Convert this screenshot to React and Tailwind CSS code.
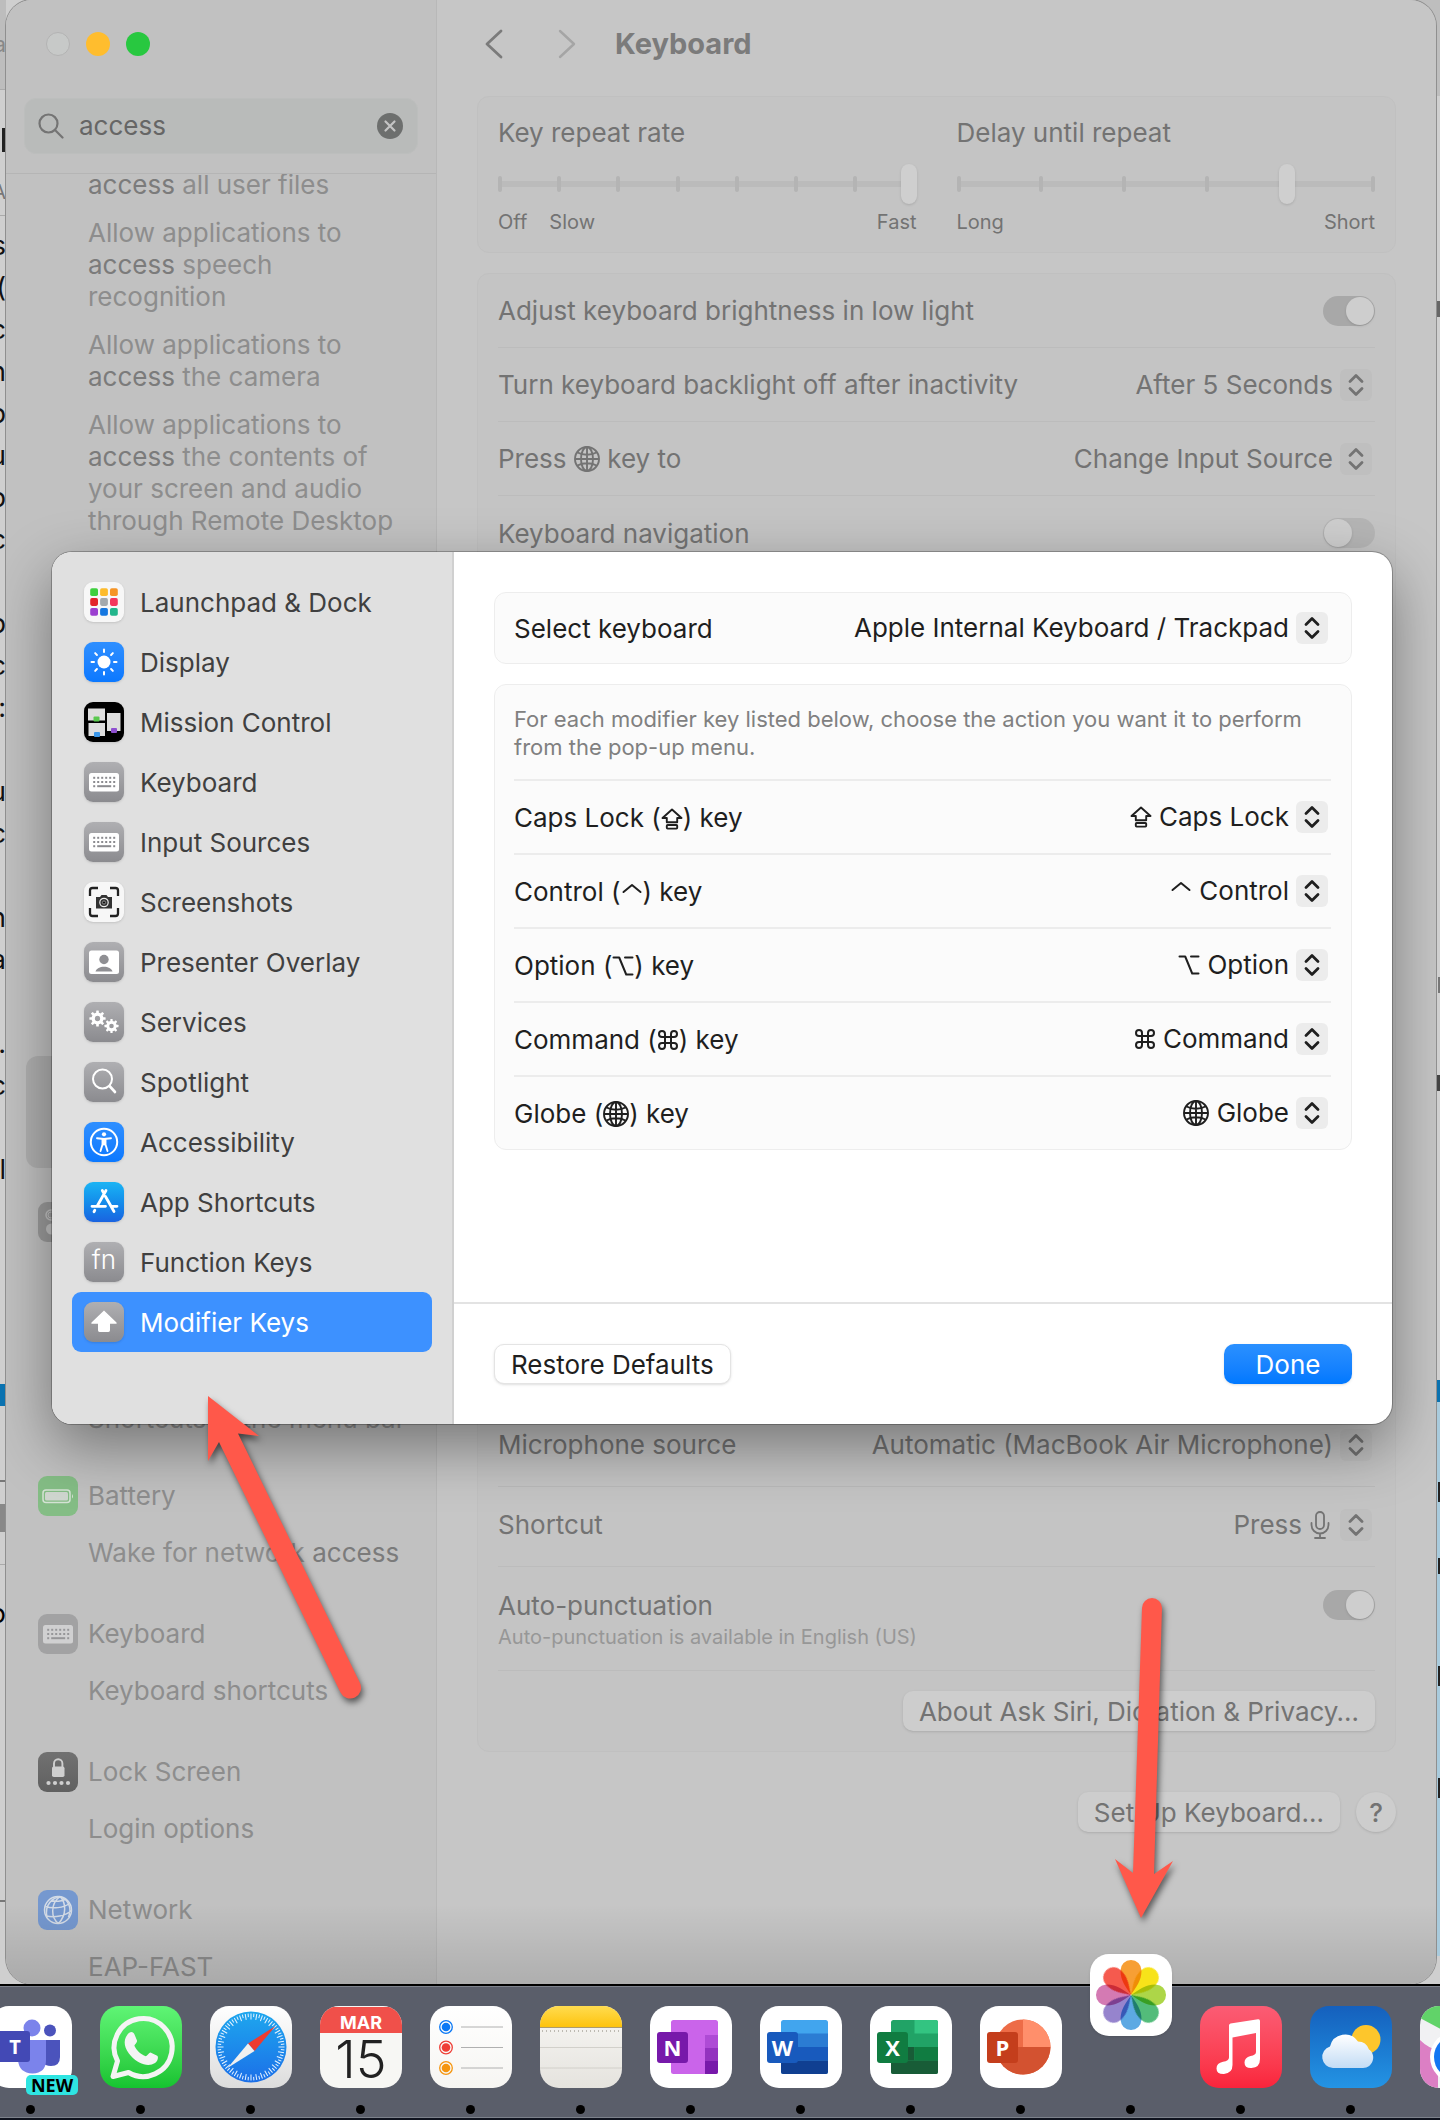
import React from "react";

const keyboardDots = [0, 1, 2, 3, 4, 5];

function KeyboardGlyph() {
  return (
    <svg viewBox="0 0 40 40" className="size-full" aria-hidden="true">
      <rect x="5" y="11" width="30" height="18.500" rx="2.500" fill="#fff" />
      <g fill="#8b8b8f">
        {[0, 1].map((r) =>
          keyboardDots.map((d) => <rect key={r + "-" + d} x={9.200 + d * 4} y={14.800 + r * 4.200} width="2" height="2" />)
        )}
        <rect x="9.200" y="23.200" width="2" height="2" />
        <rect x="13.200" y="23.200" width="14" height="2" />
        <rect x="29.200" y="23.200" width="2" height="2" />
      </g>
    </svg>
  );
}

function Globe({ className }) {
  return (
    <svg viewBox="0 0 26 26" className={className} fill="none" stroke="currentColor" strokeWidth="1.9" aria-hidden="true">
      <circle cx="13" cy="13" r="12" />
      <ellipse cx="13" cy="13" rx="6" ry="12" />
      <path d="M13 1v24M1 13h24M3.500 6.500c5.500 3 13.500 3 19 0M3.500 19.500c5.500-3 13.500-3 19 0" />
    </svg>
  );
}

function CapsGlyph({ className }) {
  return (
    <svg viewBox="0 0 22 22" className={className} fill="none" stroke="currentColor" strokeWidth="1.9" strokeLinejoin="round" aria-hidden="true">
      <path d="M11 1.500 1.500 10h4.300v4.200h10.400V10h4.300z" />
      <rect x="5.800" y="17" width="10.400" height="3.600" rx="0.800" />
    </svg>
  );
}

function ControlGlyph({ className }) {
  return (
    <svg viewBox="0 0 22 22" className={className} fill="none" stroke="currentColor" strokeWidth="2" strokeLinecap="round" strokeLinejoin="round" aria-hidden="true">
      <path d="M2.500 10 11 3l8.500 7" />
    </svg>
  );
}

function OptionGlyph({ className }) {
  return (
    <svg viewBox="0 0 22 22" className={className} fill="none" stroke="currentColor" strokeWidth="2" strokeLinecap="round" strokeLinejoin="round" aria-hidden="true">
      <path d="M1.500 2.500h5.700l7 17h6.300M13 2.500h7.500" />
    </svg>
  );
}

function CommandGlyph({ className }) {
  return (
    <svg viewBox="1 1 22 22" className={className} fill="none" stroke="currentColor" strokeWidth="2" aria-hidden="true">
      <path d="M15 6v12a3 3 0 1 0 3-3H6a3 3 0 1 0 3 3V6a3 3 0 1 0-3 3h12a3 3 0 1 0-3-3" />
    </svg>
  );
}

function MicGlyph({ className }) {
  return (
    <svg viewBox="0 0 20 28" className={className} fill="none" stroke="currentColor" strokeWidth="1.8" strokeLinecap="round" aria-hidden="true">
      <rect x="6" y="1" width="8" height="17" rx="4" />
      <path d="M1.500 12v2a8.500 8.500 0 0 0 17 0v-2M10 22.500V27M5 27h10" />
    </svg>
  );
}

function Stepper() {
  return (
    <svg viewBox="0 0 32 32" className="size-8" fill="none" stroke="currentColor" strokeWidth="2.800" strokeLinecap="round" strokeLinejoin="round" aria-hidden="true">
      <path d="m10 12.500 6-6 6 6M10 19.500l6 6 6-6" />
    </svg>
  );
}

function PopUp({ id, value, icon, muted }) {
  return (
    <span className={muted ? "relative mr-[3px] flex items-center text-[#737373]" : "relative mr-[3px] flex items-center text-[#1f1f1f]"}>
      {icon}
      <select id={id} className="field-sizing-content h-8 appearance-none bg-transparent pr-[39px] leading-8 outline-none">
        <option>{value}</option>
      </select>
      <span className={muted ? "pointer-events-none absolute right-0 rounded-md bg-[#bfbfbf]" : "pointer-events-none absolute right-0 rounded-md bg-[#ececec]"}>
        <Stepper />
      </span>
    </span>
  );
}

function Toggle({ id, on }) {
  return (
    <span className="relative flex">
      <input id={id} type="checkbox" role="switch" defaultChecked={on} className="peer h-[30px] w-[52px] appearance-none rounded-full bg-[#b5b5b5] checked:bg-[#a8a8a8]" />
      <span className="pointer-events-none absolute top-px left-px size-7 rounded-full bg-[#cecece] shadow-sm peer-checked:left-[23px]" />
    </span>
  );
}

function Slider({ id, label, ticks, value, children }) {
  return (
    <div>
      <label htmlFor={id} className="block leading-8">{label}</label>
      <div className="relative mt-[15px] flex h-10 items-center">
        <div className="h-1.5 flex-1 rounded-full bg-[#bbbbbb]" />
        <div className="absolute inset-x-0 flex justify-between">
          {Array.from({ length: ticks }, (_, i) => <span key={i} className="h-4 w-1 rounded-sm bg-[#b4b4b4]" />)}
        </div>
        <input
          id={id}
          type="range"
          min="0"
          max={ticks - 1}
          defaultValue={value}
          className="absolute inset-x-0 h-10 w-full appearance-none bg-transparent [&::-webkit-slider-thumb]:h-10 [&::-webkit-slider-thumb]:w-4 [&::-webkit-slider-thumb]:appearance-none [&::-webkit-slider-thumb]:rounded-lg [&::-webkit-slider-thumb]:bg-[#cfcfcf] [&::-webkit-slider-thumb]:shadow"
        />
      </div>
      <div className="mt-1.5 flex text-[20px] leading-6">{children}</div>
    </div>
  );
}

/* ---------- sheet sidebar icons ---------- */
const launchColors = ["#3fd03f", "#fdbb2c", "#f59425", "#e3242b", "#a3a9ad", "#f5365c", "#9b3fd0", "#1577e0", "#22b58b"];
const sunRays = [0, 45, 90, 135, 180, 225, 270, 315];

const gear = (cx, cy, r) => (
  <g transform={"translate(" + cx + " " + cy + ")"}>
    {sunRays.map((a) => <rect key={a} x={-r * 0.220} y={-r * 1.350} width={r * 0.440} height={r * 0.700} rx="0.500" fill="#fff" transform={"rotate(" + a + ")"} />)}
    <circle r={r * 0.720} fill="none" stroke="#fff" strokeWidth={r * 0.560} />
  </g>
);

const glyphs = {
  launch: (
    <svg viewBox="0 0 40 40" aria-hidden="true">
      {launchColors.map((c, i) => <rect key={c} x={6.200 + (i % 3) * 9.900} y={6.200 + Math.floor(i / 3) * 9.900} width="7.800" height="7.800" rx="1.800" fill={c} />)}
    </svg>
  ),
  display: (
    <svg viewBox="0 0 40 40" aria-hidden="true">
      <circle cx="20" cy="20" r="6.500" fill="#fff" />
      {sunRays.map((a) => <rect key={a} x="19" y="6.500" width="2" height="4.500" rx="1" fill="#fff" transform={"rotate(" + a + " 20 20)"} />)}
    </svg>
  ),
  mission: (
    <svg viewBox="0 0 40 40" aria-hidden="true">
      <rect x="4" y="6.500" width="17" height="12" fill="#dedede" />
      <rect x="4.500" y="21" width="16.500" height="13" fill="#dedede" />
      <rect x="23" y="11" width="13.500" height="18" fill="#dedede" />
      <rect x="9.500" y="14.500" width="6" height="5" rx="1" fill="#5ac94f" />
      <rect x="10" y="30" width="6" height="5" rx="1" fill="#3b96e8" />
      <rect x="27" y="26" width="6" height="5" rx="1" fill="#8e4fd0" />
    </svg>
  ),
  keyboard: <KeyboardGlyph />,
  screenshot: (
    <svg viewBox="0 0 40 40" fill="none" aria-hidden="true">
      <path d="M6 14V8.500Q6 6 8.500 6H14M26 6h5.500Q34 6 34 8.500V14M34 26v5.500Q34 34 31.500 34H26M14 34H8.500Q6 34 6 31.500V26" stroke="#222" strokeWidth="2.300" />
      <path d="M12 15h4l1.500-2h5L24 15h4v11.500H12z" fill="#333" />
      <circle cx="20" cy="20.500" r="4.200" fill="#333" stroke="#eee" strokeWidth="1.200" />
      <circle cx="20" cy="20.500" r="1.600" fill="#111" stroke="#aaa" strokeWidth="0.800" />
    </svg>
  ),
  presenter: (
    <svg viewBox="0 0 40 40" aria-hidden="true">
      <rect x="5" y="8.500" width="30" height="23.500" rx="2.500" fill="#fff" />
      <circle cx="20" cy="17.500" r="4.700" fill="#8f8f93" />
      <path d="M11.500 29.500c1.500-6.500 15.500-6.500 17 0z" fill="#8f8f93" />
    </svg>
  ),
  services: (
    <svg viewBox="0 0 40 40" aria-hidden="true">
      {gear(13.500, 16.500, 6)}
      {gear(27.500, 24, 5.200)}
    </svg>
  ),
  spotlight: (
    <svg viewBox="0 0 40 40" fill="none" stroke="#fff" strokeLinecap="round" aria-hidden="true">
      <circle cx="18.500" cy="17" r="9.500" strokeWidth="2" />
      <path d="m25.500 24 5.500 6" strokeWidth="2.600" />
    </svg>
  ),
  accessibility: (
    <svg viewBox="0 0 40 40" aria-hidden="true">
      <circle cx="20" cy="20" r="13.200" fill="none" stroke="#fff" strokeWidth="2" />
      <circle cx="20" cy="12.300" r="2.100" fill="#fff" />
      <path d="M13 16.200 20 17l7-.8M20 17v5.500M18.500 17.500v5L16.500 29M21.500 17.500v5l2 6.500" fill="none" stroke="#fff" strokeWidth="1.900" strokeLinecap="round" strokeLinejoin="round" />
    </svg>
  ),
  store: (
    <svg viewBox="0 0 40 40" fill="none" stroke="#fff" strokeWidth="2.800" strokeLinecap="round" aria-hidden="true">
      <path d="M18.300 8.500 20 11.500M22 8.500 13.500 23.500M8 24.300h13.500M27.500 24.300H33M21.500 14.500l8.500 15M10.800 28.300l-.8 1.400" />
    </svg>
  ),
  fn: <span className="flex size-full items-center justify-center pb-1 text-[26px] leading-none font-light text-white">fn</span>,
  modifier: (
    <svg viewBox="0 0 40 40" aria-hidden="true">
      <path d="M20 8.500 32.500 20.500q.8 1.200-.5 1.300H26v6.500q0 1.600-1.600 1.600h-8.800q-1.600 0-1.600-1.600v-6.500H8q-1.300-.1-.5-1.300z" fill="#fff" />
    </svg>
  ),
};

const grey = "size-10 shrink-0 rounded-[9px] bg-linear-to-b from-[#afafb2] to-[#8b8b8f] shadow-sm";
const blue = "size-10 shrink-0 rounded-[9px] bg-linear-to-b from-[#2e8fff] to-[#0a78ff] shadow-sm";
const white = "size-10 shrink-0 rounded-[9px] bg-[#f7f7f7] shadow-sm";

const categories = [
  ["Launchpad & Dock", "launch", white],
  ["Display", "display", blue],
  ["Mission Control", "mission", "size-10 shrink-0 rounded-[9px] bg-black shadow-sm"],
  ["Keyboard", "keyboard", grey],
  ["Input Sources", "keyboard", grey],
  ["Screenshots", "screenshot", white],
  ["Presenter Overlay", "presenter", grey],
  ["Services", "services", grey],
  ["Spotlight", "spotlight", grey],
  ["Accessibility", "accessibility", blue],
  ["App Shortcuts", "store", "size-10 shrink-0 rounded-[9px] bg-linear-to-b from-[#1cb4f4] to-[#1a63e0] shadow-sm"],
  ["Function Keys", "fn", grey],
  ["Modifier Keys", "modifier", grey],
];

const modifiers = [
  ["Caps Lock", CapsGlyph, "inline-block size-[22px] align-[-3px]", "size-[22px] mr-[7px]"],
  ["Control", ControlGlyph, "inline-block size-[22px] align-[-3px]", "size-[22px] mr-[7px]"],
  ["Option", OptionGlyph, "inline-block size-[22px] align-[-2px]", "size-[22px] mr-[7px]"],
  ["Command", CommandGlyph, "inline-block size-[22px] align-[-2px]", "size-[22px] mr-[7px]"],
  ["Globe", Globe, "inline-block size-[26px] align-[-4px]", "size-[26px] mr-2"],
];

/* ---------- sidebar of the settings window ---------- */
const Hit = () => <span className="text-[#7b7b7b]">access</span>;

const results = [
  {
    name: "Battery",
    sub: <>Wake for network <Hit /></>,
    box: "size-10 rounded-[9px] bg-[#84bd85]",
    art: (
      <svg viewBox="0 0 40 40" fill="none" aria-hidden="true">
        <rect x="5" y="14" width="27" height="12.500" rx="3" stroke="#d5e3d5" strokeWidth="1.500" />
        <rect x="7" y="16" width="23" height="8.500" rx="1.500" fill="#cfd6cf" />
        <path d="M34 18v4.500q2-2.200 0-4.500z" fill="#d5e3d5" />
      </svg>
    ),
  },
  { name: "Keyboard", sub: "Keyboard shortcuts", box: "size-10 rounded-[9px] bg-[#a2a2a3]", art: <div className="size-full opacity-50"><KeyboardGlyph /></div> },
  {
    name: "Lock Screen",
    sub: "Login options",
    box: "size-10 rounded-[9px] bg-linear-to-b from-[#717171] to-[#606060]",
    art: (
      <svg viewBox="0 0 40 40" fill="none" aria-hidden="true">
        <rect x="14" y="14.500" width="12.500" height="10.500" rx="1.800" fill="#cfcfcf" />
        <path d="M16 15v-3.500a4.200 4.200 0 0 1 8.400 0V15" stroke="#cfcfcf" strokeWidth="1.900" />
        {[10.500, 17, 23.500, 30].map((x) => <circle key={x} cx={x} cy="31" r="2.100" fill="#cfcfcf" />)}
      </svg>
    ),
  },
  {
    name: "Network",
    sub: "EAP-FAST",
    box: "size-10 rounded-[9px] bg-[#7598cf]",
    art: (
      <svg viewBox="0 0 40 40" fill="none" stroke="#d3dbe6" strokeWidth="1.500" aria-hidden="true">
        <circle cx="20" cy="20" r="13.500" />
        <path d="M22 6.500C12 14 13 28 20.500 33.500M22 6.500c6 6 7 18-1.500 27M22 6.500C15 8 6 14 9 27.500M22 6.500c9 3 12 12 8.500 20.500M7.500 16.500c7 2.500 18 1.500 24-3M8.500 26c8 2 19 0 25-5.500M13 10.500c4 1.500 11 1 15-1.500" />
      </svg>
    ),
  },
];

function Sidebar() {
  return (
    <aside className="relative w-[431px] shrink-0 overflow-hidden border-r border-[#b8b8b8] bg-[#c1c1c1] text-[26px] leading-8 text-[#8d8d8d]">
      <div className="h-[174px] border-b border-[#b5b5b5]">
        <div className="flex gap-4 pt-8 pl-10">
          <button aria-label="Close" className="size-6 rounded-full border border-[#b3b3b3] bg-[#c7c9c8]" />
          <button aria-label="Minimize" className="size-6 rounded-full bg-[#ffbd2e]" />
          <button aria-label="Zoom" className="size-6 rounded-full bg-[#28c840]" />
        </div>
        <div className="mx-[18px] mt-[42px] flex h-14 items-center rounded-xl border border-[#bcbebd] bg-[#b9bbba] pr-3.5 pl-[13px]">
          <svg viewBox="0 0 26 26" className="size-[26px]" fill="none" stroke="#747474" strokeWidth="2.200" strokeLinecap="round" aria-hidden="true">
            <circle cx="10.500" cy="10.500" r="9" />
            <path d="m17.500 17.500 7 7" />
          </svg>
          <input aria-label="Search" defaultValue="access" className="ml-[15px] min-w-0 flex-1 bg-transparent text-[#666] outline-none" />
          <button aria-label="Clear search" className="flex size-[26px] items-center justify-center rounded-full bg-[#6d6f6e]">
            <svg viewBox="0 0 26 26" fill="none" stroke="#c4c4c4" strokeWidth="2.200" strokeLinecap="round" aria-hidden="true">
              <path d="m8.500 8.500 9 9m0-9-9 9" />
            </svg>
          </button>
        </div>
      </div>
      <div className="overflow-hidden">
        <div className="-mt-[5px] flex flex-col gap-4 pl-[82px]">
          <p><Hit /> all user files</p>
          <p>Allow applications to<br /><Hit /> speech<br />recognition</p>
          <p>Allow applications to<br /><Hit /> the camera</p>
          <p>Allow applications to<br /><Hit /> the contents of<br />your screen and audio<br />through Remote Desktop</p>
        </div>
        <div className="mx-5 mt-[519px] h-28 rounded-xl bg-[#b0b0b0]" />
        <div className="mt-[34px] ml-8 size-10 rounded-[9px] bg-[#9c9c9c]">
          <svg viewBox="0 0 40 40" fill="none" aria-hidden="true">
            <rect x="8" y="8" width="24" height="10" rx="5" stroke="#c4c4c4" strokeWidth="1.500" />
            <circle cx="13" cy="13" r="3" stroke="#c4c4c4" />
            <rect x="8" y="21.500" width="24" height="11" rx="5.500" fill="#c4c4c4" />
          </svg>
        </div>
        <p className="mt-[161px] pl-[82px]">Shortcuts in the menu bar</p>
        <div className="mt-[41px] flex flex-col gap-[45px] pl-8">
          {results.map((r) => (
            <div key={r.name}>
              <div className="flex h-10 items-center gap-2.5">
                <span className={r.box}>{r.art}</span>
                {r.name}
              </div>
              <p className="mt-[21px] pl-[50px]">{r.sub}</p>
            </div>
          ))}
        </div>
      </div>
    </aside>
  );
}

function SettingsMain() {
  return (
    <main className="min-w-0 flex-1 bg-[#c6c6c6] px-10 text-[26px] text-[#737373]">
      <header className="mb-2 flex h-[88px] items-center pl-2">
        <button aria-label="Back">
          <svg viewBox="0 0 18 30" className="h-[30px] w-[18px]" fill="none" stroke="#7b7b7b" strokeWidth="2.800" strokeLinecap="round" strokeLinejoin="round"><path d="M16 2 2 15l14 13" /></svg>
        </button>
        <button aria-label="Forward" className="ml-[55px]">
          <svg viewBox="0 0 18 30" className="h-[30px] w-[18px]" fill="none" stroke="#a5a5a5" strokeWidth="2.400" strokeLinecap="round" strokeLinejoin="round"><path d="m2 2 14 13L2 28" /></svg>
        </button>
        <h1 className="ml-[39px] text-[29px] font-bold text-[#7b7b7b]">Keyboard</h1>
      </header>

      <section className="grid grid-cols-2 gap-10 rounded-xl border border-[#c0c0c0] bg-[#c4c4c4] p-5 pb-[18px]">
        <Slider id="rate" label="Key repeat rate" ticks={8} value={7}>
          <span>Off</span><span className="ml-[22px]">Slow</span><span className="ml-auto">Fast</span>
        </Slider>
        <Slider id="delay" label="Delay until repeat" ticks={6} value={4}>
          <span>Long</span><span className="ml-auto">Short</span>
        </Slider>
      </section>

      <section className="mt-5 rounded-xl border border-[#c0c0c0] bg-[#c4c4c4] px-5">
        <div className="flex h-[74px] items-center justify-between border-b border-[#bcbcbc]">
          <label htmlFor="bright">Adjust keyboard brightness in low light</label>
          <Toggle id="bright" on />
        </div>
        <div className="flex h-[74px] items-center justify-between border-b border-[#bcbcbc]">
          <label htmlFor="backlight">Turn keyboard backlight off after inactivity</label>
          <PopUp id="backlight" value="After 5 Seconds" muted />
        </div>
        <div className="flex h-[74px] items-center justify-between border-b border-[#bcbcbc]">
          <label htmlFor="globe-key">Press <Globe className="inline-block size-[26px] align-[-4px]" /> key to</label>
          <PopUp id="globe-key" value="Change Input Source" muted />
        </div>
        <div className="flex h-[74px] items-center justify-between">
          <label htmlFor="navi">Keyboard navigation</label>
          <Toggle id="navi" />
        </div>
        <div className="mt-[837px] flex h-20 items-center justify-between border-b border-[#b9b9b9] pb-1">
          <label htmlFor="mic">Microphone source</label>
          <PopUp id="mic" value="Automatic (MacBook Air Microphone)" muted />
        </div>
        <div className="flex h-20 items-center justify-between border-b border-[#bcbcbc] pb-1">
          <label htmlFor="shortcut">Shortcut</label>
          <span className="relative mr-[3px] flex items-center">
            <select id="shortcut" className="field-sizing-content h-8 appearance-none bg-transparent pr-[70px] leading-8 outline-none"><option>Press</option></select>
            <span className="pointer-events-none absolute right-0 flex items-center gap-2.5">
              <MicGlyph className="h-7 w-5" />
              <span className="rounded-md bg-[#bfbfbf]"><Stepper /></span>
            </span>
          </span>
        </div>
        <div className="flex h-[104px] justify-between border-b border-[#bcbcbc] pt-[23px]">
          <div>
            <label htmlFor="punct" className="block leading-8">Auto-punctuation</label>
            <p className="mt-[3px] text-[20px] leading-6 text-[#979797]">Auto-punctuation is available in English (US)</p>
          </div>
          <Toggle id="punct" on />
        </div>
        <div className="flex h-20 items-center justify-end">
          <button className="h-10 rounded-[10px] bg-[#cdcdcd] px-4 shadow-sm">About Ask Siri, Dictation &amp; Privacy…</button>
        </div>
      </section>

      <div className="mt-10 flex justify-end gap-4">
        <button className="h-10 rounded-[10px] bg-[#cdcdcd] px-4 shadow-sm">Set Up Keyboard…</button>
        <button aria-label="Help" className="size-10 rounded-full bg-[#cdcdcd] font-medium shadow-sm">?</button>
      </div>
    </main>
  );
}

function Sheet() {
  return (
    <div role="dialog" aria-label="Keyboard Shortcuts" className="absolute top-[552px] right-11 left-[46px] flex overflow-hidden rounded-[20px] bg-white shadow-[0_0_0_1px_rgba(0,0,0,0.25),0_22px_60px_rgba(0,0,0,0.4)]">
      <nav className="w-[402px] shrink-0 border-r-2 border-[#d0d0d0] bg-[#e0e0e0] px-5 pt-5">
        {categories.map(([name, glyph, box], i) => (
          <button
            key={name}
            className={i === 12
              ? "flex h-[60px] w-full items-center gap-4 rounded-[9px] bg-[#3d91ff] pl-3 text-[26px] text-white"
              : "flex h-[60px] w-full items-center gap-4 rounded-[9px] pl-3 text-[26px] text-[#404040]"}
          >
            <span className={box}>{glyphs[glyph]}</span>
            {name}
          </button>
        ))}
      </nav>
      <div className="flex min-w-0 flex-1 flex-col text-[26px] text-[#1f1f1f]">
        <div className="px-10 pt-10">
          <div className="flex h-[72px] items-center justify-between rounded-xl border border-[#ededed] bg-[#fbfbfb] pr-5 pl-[19px]">
            <label htmlFor="kb">Select keyboard</label>
            <PopUp id="kb" value="Apple Internal Keyboard / Trackpad" />
          </div>
          <div className="mt-5 rounded-xl border border-[#ededed] bg-[#fbfbfb] pr-5 pl-[19px]">
            <p className="h-[94px] pt-5 text-[22px] leading-7 text-[#808080]">
              For each modifier key listed below, choose the action you want it to perform from the pop-up menu.
            </p>
            {modifiers.map(([name, Glyph, inline, lead]) => (
              <div key={name} className="flex h-[74px] items-center justify-between border-t-2 border-[#ececec]">
                <label htmlFor={name}>{name} (<Glyph className={inline} />) key</label>
                <PopUp id={name} value={name} icon={<Glyph className={lead} />} />
              </div>
            ))}
          </div>
        </div>
        <div className="mt-[152px] flex h-[122px] items-center justify-between border-t-2 border-[#e3e3e3] px-10">
          <button className="h-10 rounded-[10px] border border-[#e4e4e4] bg-white px-4 shadow-sm">Restore Defaults</button>
          <button className="h-10 w-32 rounded-[10px] bg-linear-to-b from-[#2a90ff] to-[#0078ff] text-white shadow-sm">Done</button>
        </div>
      </div>
    </div>
  );
}

/* ---------- dock ---------- */
const tile = "relative size-[82px] shrink-0 rounded-[19px]";
const petals = ["#f7941d", "#f7e000", "#a4d233", "#3fb56b", "#4a9fe0", "#8a76c8", "#cf6bab", "#f4473a"];

function OfficeTile({ letter, square, children }) {
  return (
    <svg viewBox="0 0 82 82" aria-hidden="true">
      {children}
      <rect x="7" y="26" width="31" height="31" rx="3" fill={square} />
      <text x="22.500" y="49.500" textAnchor="middle" fontSize="22" fontWeight="700" fill="#fff" fontFamily="Open Sans, sans-serif">{letter}</text>
    </svg>
  );
}

const apps = [
  ["Teams", tile + " bg-white", (
    <>
      <svg viewBox="0 0 82 82" aria-hidden="true">
        <circle cx="60" cy="24.500" r="6" fill="#4b53bc" />
        <path d="M52 34h18v17q0 9-9 9-6 0-9-4z" fill="#4b53bc" />
        <circle cx="42" cy="22" r="8.500" fill="#7b83eb" />
        <path d="M28 34h28v20q0 13-13.500 13.500Q29 67 28 54z" fill="#7b83eb" />
        <rect x="8" y="25" width="32" height="31" rx="3" fill="#4349b5" />
        <text x="25" y="48" textAnchor="middle" fontSize="20" fontWeight="700" fill="#fff" fontFamily="Open Sans, sans-serif">T</text>
      </svg>
      <span className="absolute top-[69px] left-9 flex h-5 w-[52px] items-center justify-center rounded-[5px] bg-[#2fe5e2] font-['Open_Sans',sans-serif] text-[18px] font-bold text-black">NEW</span>
    </>
  )],
  ["WhatsApp", tile + " bg-linear-to-b from-[#5ff575] to-[#14c32f]", (
    <svg viewBox="0 0 82 82" aria-hidden="true">
      <path d="M13 70.500 17.500 55A29 29 0 1 1 28.500 66.500z" fill="none" stroke="#f4f4f4" strokeWidth="5" strokeLinejoin="round" />
      <path d="M27.500 28.500c2-3.500 6-3.500 7 0l2.500 6c.6 1.600-2.200 4-2.600 5.200 2.200 4.800 6.600 8.800 11.400 10.600 1.600-.6 3.600-4.300 5.200-3.600l6.200 3c1.500 1 .7 5.300-2.200 7.300-7 4.500-17 .5-24-7-6.500-7-8.500-15-3.500-21.500z" fill="#f4f4f4" />
    </svg>
  )],
  ["Safari", tile + " bg-linear-to-b from-white to-[#dcdcdc]", (
    <svg viewBox="0 0 82 82" aria-hidden="true">
      <defs><linearGradient id="saf" x2="0" y2="1"><stop stopColor="#1ea7ee" /><stop offset="1" stopColor="#1b6fe8" /></linearGradient></defs>
      <circle cx="41" cy="41" r="35.500" fill="url(#saf)" />
      {Array.from({ length: 72 }, (_, i) => <path key={i} d={i % 2 ? "M41 7.500v3.500" : "M41 7.500v6"} stroke="#e8f4ff" strokeWidth="1" transform={"rotate(" + i * 5 + " 41 41)"} />)}
      <path d="M65.500 20 44.500 45 38 37.500z" fill="#ee3b30" />
      <path d="M17.500 62 38 37.500l6.500 7.500z" fill="#f0f0f0" />
    </svg>
  )],
  ["Calendar", tile + " overflow-hidden bg-[#f7f7f4] text-center", (
    <>
      <div className="flex h-[26px] items-center justify-center bg-[#f0504a] pt-1 text-[18px] font-bold text-white">MAR</div>
      <div className="text-[52px] leading-[54px] font-light text-[#222]">15</div>
    </>
  )],
  ["Reminders", tile + " bg-linear-to-b from-white to-[#f6f5f2]", (
    <svg viewBox="0 0 82 82" fill="none" aria-hidden="true">
      {["#0a78f5", "#ef3e36", "#f5950f"].map((c, i) => (
        <g key={c}>
          <circle cx="16" cy={21 + i * 20.500} r="6.300" stroke={c} strokeWidth="1.300" />
          <circle cx="16" cy={21 + i * 20.500} r="4.300" fill={c} />
          <path d={"M31 " + (21 + i * 20.500) + "h42"} stroke="#b0b0b0" />
        </g>
      ))}
    </svg>
  )],
  ["Notes", tile + " overflow-hidden bg-linear-to-b from-[#f8f7f4] to-[#e5e3de]", (
    <svg viewBox="0 0 82 82" fill="none" aria-hidden="true">
      <defs><linearGradient id="note" x2="0" y2="1"><stop stopColor="#ffdc50" /><stop offset="1" stopColor="#fec30d" /></linearGradient></defs>
      <rect width="82" height="21" fill="url(#note)" />
      <path d="M0 21.500h82" stroke="#ad9c6c" />
      <path d="M2 25h80" stroke="#bdbab2" strokeWidth="2" strokeDasharray="1 3" />
      <path d="M0 41.500h82M0 62h82" stroke="#d2d0ca" />
    </svg>
  )],
  ["OneNote", tile + " bg-white", (
    <OfficeTile letter="N" square="#7719aa">
      <rect x="21" y="14" width="47" height="54" rx="2.500" fill="#ca64ea" />
      <path d="M55 29h13v13H55z" fill="#ae4bd5" /><path d="M55 42h13v13H55z" fill="#9332bf" /><path d="M55 55h13v11q0 2-2 2H55z" fill="#7719aa" />
    </OfficeTile>
  )],
  ["Word", tile + " bg-white", (
    <OfficeTile letter="W" square="#185abd">
      <rect x="21" y="14" width="47" height="54" rx="2.500" fill="#41a5ee" />
      <path d="M21 27.500h47V41H21z" fill="#2b7cd3" /><path d="M21 41h47v13.500H21z" fill="#185abd" /><path d="M21 54.500h47V66q0 2-2 2H23q-2 0-2-2z" fill="#103f91" />
    </OfficeTile>
  )],
  ["Excel", tile + " bg-white", (
    <OfficeTile letter="X" square="#107c41">
      <rect x="21" y="14" width="47" height="54" rx="2.500" fill="#21a366" />
      <path d="M44.500 14H66q2 0 2 2v11.500H44.500z" fill="#33c481" /><path d="M21 41h23.500v13.500H21z" fill="#185c37" /><path d="M44.500 41H68v13.500H44.500z" fill="#107c41" /><path d="M21 54.500h47V66q0 2-2 2H23q-2 0-2-2z" fill="#185c37" />
    </OfficeTile>
  )],
  ["PowerPoint", tile + " bg-white", (
    <OfficeTile letter="P" square="#c43e1c">
      <circle cx="43" cy="41" r="27.500" fill="#ed6c47" />
      <path d="M43 13.500A27.500 27.500 0 0 1 70.500 41H43z" fill="#ff8f6b" /><path d="M15.500 41h55a27.500 27.500 0 0 1-55 0z" fill="#d35230" />
    </OfficeTile>
  )],
  ["Photos", tile + " -top-[52px] bg-white shadow-sm", (
    <svg viewBox="0 0 82 82" aria-hidden="true">
      {petals.map((c, i) => (
        <path key={c} d="M41 41C36 33 30.500 27 30.500 16.500a10.500 10.500 0 0 1 21 0C51.500 27 46 33 41 41z" fill={c} className="mix-blend-multiply" opacity="0.900" transform={"rotate(" + i * 45 + " 41 41)"} />
      ))}
    </svg>
  )],
  ["Music", tile + " bg-linear-to-b from-[#fb5c74] to-[#fa233b]", (
    <svg viewBox="0 0 82 82" fill="#fff" aria-hidden="true">
      <path d="M29 19.500Q29 18 30.500 17.500L58 13.200q2-.3 2 1.800V53q0 8.500-8.500 9-7 .3-7-5.500 0-5 6-6.500 5.500-.8 5.500-4V27l-23.500 4.500V59q0 8-8.500 9-7.500.2-7.500-5.500 0-5.500 6.500-6.800 6-.7 6-4.200z" />
    </svg>
  )],
  ["Weather", tile + " bg-linear-to-b from-[#1560bd] to-[#2494e4]", (
    <svg viewBox="0 0 82 82" aria-hidden="true">
      <defs><linearGradient id="cloud" x2="0" y2="1"><stop stopColor="#fff" /><stop offset="1" stopColor="#c3dcf5" /></linearGradient></defs>
      <circle cx="56" cy="33.500" r="14.500" fill="#fdc62c" />
      <path d="M23 62a11 11 0 0 1-3-21.500A15.500 15.500 0 0 1 48 35.500a12 12 0 0 1 11 8c8 5.500 4 18.500-6 18.500z" fill="url(#cloud)" />
    </svg>
  )],
  ["Maps", tile + " overflow-hidden bg-[#f1f1f3]", (
    <svg viewBox="0 0 82 82" aria-hidden="true">
      <path d="M0 0h30v28L0 12z" fill="#61d369" />
      <path d="M0 34q8 8 18 10v38H0z" fill="#dc7fc4" />
      <circle cx="36" cy="51" r="26" fill="#fff" /><circle cx="36" cy="51" r="22" fill="#1476f2" />
    </svg>
  )],
];

function Dock() {
  return (
    <footer className="relative z-10 h-[136px] border-t-2 border-black bg-[#5a5e6a]">
      <div className="h-[132px] border-y border-[#7d828c]">
        <div className="-ml-2.5 flex gap-7 pt-[19px]">
          {apps.map(([name, cls, art], i) => (
            <div key={name} className="flex shrink-0 flex-col items-center">
              <button aria-label={name} className={cls}>{art}</button>
              {i < 13 && <span className="mt-[17px] mr-0.5 size-[9px] rounded-full bg-black" />}
            </div>
          ))}
        </div>
      </div>
      <div className="h-0.5 bg-[#10141f]" />
    </footer>
  );
}

/* ---------- slivers of the document behind the window ---------- */
const leftLines = ["s", "(", "c", "n", "b", "u", "b", "c", "", "p", "c", ":", "", "u", "c", "", "n", "a", "", ".", "c", "", "el"];

function LeftSliver() {
  return (
    <div aria-hidden="true" className="-mr-[26px] w-8 shrink-0 overflow-hidden bg-[#cfcfcf]">
      <div className="w-1.5 overflow-hidden">
        <div className="flex h-[90px] items-center justify-end border-b border-[#aaa] bg-[#bdbdbd] text-[22px] text-[#888]">a</div>
        <div className="mt-[38px] ml-0.5 h-6 bg-[#222]" />
        <div className="mt-4 flex h-12 items-center justify-end border-b border-[#aaa] text-[20px] text-[#777]">A</div>
        <div className="mt-2 text-[27px] text-[#111]">
          {leftLines.map((t, i) => <div key={i} className="flex h-[42px] items-center justify-end leading-none">{t}</div>)}
        </div>
        <div className="mt-[194px] h-[22px] bg-[#0a72b0]" />
        <div className="mt-[74px] h-0.5 bg-[#777]" />
        <div className="mt-[22px] h-7 bg-[#888]" />
        <div className="mt-8 flex h-[100px] items-center justify-end border-t border-[#aaa] text-[27px]">o</div>
        <div className="mt-[236px] h-0.5 bg-[#777]" />
      </div>
    </div>
  );
}

function RightSliver() {
  return (
    <div aria-hidden="true" className="-ml-8 flex w-9 shrink-0 flex-col items-end bg-[#d0d0d0]">
      <div className="h-24 w-full bg-[#bebebe]" />
      <div className="mt-[205px] h-4 w-1 bg-[#666]" />
      <div className="mt-[660px] h-4 w-0.5 bg-[#777]" />
      <div className="mt-[82px] h-4 w-1 bg-[#444]" />
      <div className="mt-[289px] h-[22px] w-1 bg-[#0a72b0]" />
      <div className="flex w-full flex-1 flex-col items-end gap-14 bg-[#a9cbdd] pt-20">
        <div className="h-5 w-0.5 bg-[#222]" />
        <div className="h-4 w-0.5 bg-[#222]" />
        <div className="mt-9 h-5 w-0.5 bg-[#222]" />
        <div className="mt-9 h-5 w-0.5 bg-[#222]" />
        <div className="mt-auto h-7 w-full bg-[#cfcfcf]" />
      </div>
    </div>
  );
}

export default function App() {
  return (
    <div className="relative min-h-screen overflow-hidden bg-[#cfcfcf] font-['Inter',sans-serif]">
      <div className="flex">
        <LeftSliver />
        <div className="relative z-10 flex h-[1984px] min-w-0 flex-1 overflow-hidden rounded-[26px] shadow-[0_0_0_1px_#8f8f8f]">
          <Sidebar />
          <SettingsMain />
          <div className="pointer-events-none absolute inset-x-0 bottom-0 h-20 bg-linear-to-b from-transparent to-black/12" />
          <Sheet />
        </div>
        <RightSliver />
      </div>
      <Dock />

      <svg viewBox="0 0 170 320" className="pointer-events-none absolute top-[1390px] left-[200px] z-20 h-[320px] w-[170px] drop-shadow-[2px_4px_3px_rgba(0,0,0,0.55)]" aria-hidden="true">
        <path d="M8 6 59 46 38 43.500 160 293a10.500 10.500 0 0 1-19.500 9.500L19 52 8 71z" fill="#ff584a" />
      </svg>
      <svg viewBox="0 0 80 340" className="pointer-events-none absolute top-[1590px] right-[260px] z-20 h-[340px] w-20 drop-shadow-[2px_4px_3px_rgba(0,0,0,0.55)]" aria-hidden="true">
        <path d="M42 18a10 10 0 0 1 20 0L54 284 73 271 41 328 15 269 33 283z" fill="#ff584a" />
      </svg>
    </div>
  );
}
